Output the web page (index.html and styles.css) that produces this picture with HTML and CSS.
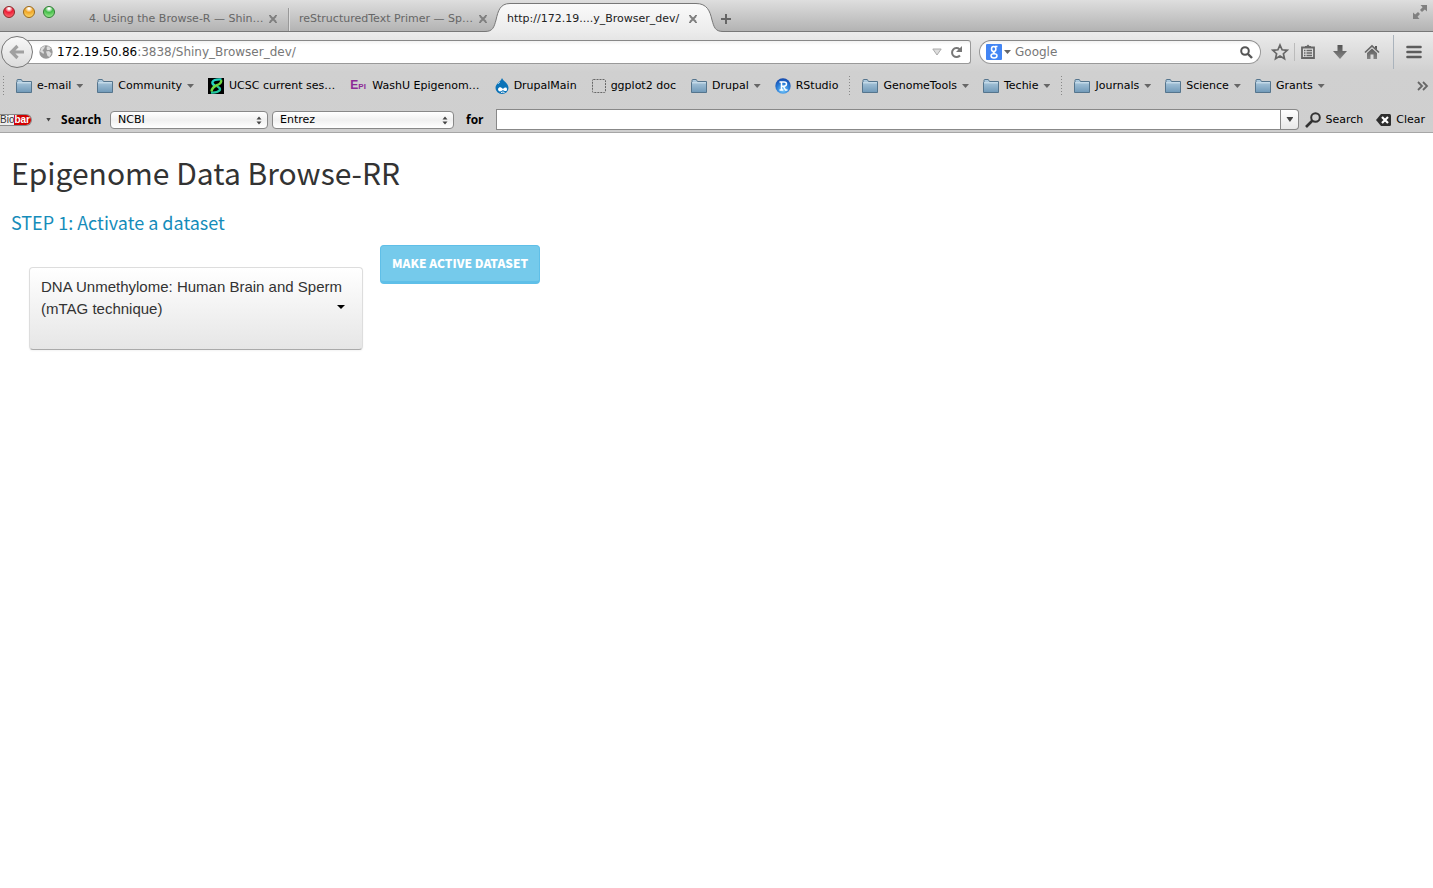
FILE: index.html
```html
<!DOCTYPE html>
<html lang="en">
<head>
<meta charset="utf-8">
<title>Epigenome Data Browse-RR</title>
<link rel="stylesheet" href="styles.css">
</head>
<body>
<svg class="defs" aria-hidden="true">
  <defs>
    <linearGradient id="folderFill" x1="0" y1="0" x2="0" y2="1"><stop offset="0" stop-color="#b4cfe2"/><stop offset="1" stop-color="#7099b8"/></linearGradient>
    <linearGradient id="tabFill" x1="0" y1="0" x2="0" y2="1"><stop offset="0" stop-color="#fafafa"/><stop offset="1" stop-color="#ebebeb"/></linearGradient>
    <linearGradient id="iconFill" x1="0" y1="0" x2="0" y2="1"><stop offset="0" stop-color="#555"/><stop offset="1" stop-color="#858585"/></linearGradient>
    <radialGradient id="rFill" cx=".5" cy=".75" r=".8"><stop offset="0" stop-color="#7fd0ff"/><stop offset=".5" stop-color="#2b7fd8"/><stop offset="1" stop-color="#0f3fa5"/></radialGradient>
    <symbol id="folder" viewBox="0 0 16 14"><path d="M1 3.5V1.2Q1 .5 1.7.5H5.3L6.5 2.5H15.5V13.5H.5V3.5Z" fill="url(#folderFill)" stroke="#55758d"/><path d="M1 3.8H15" stroke="#d3e4ef"/></symbol>
    <symbol id="cross" viewBox="0 0 10 10"><path d="M2 2 8 8M8 2 2 8" stroke="#808080" stroke-width="2"/><path d="M1 1.5H3M7 1.5H9M1 8.5H3M7 8.5H9" stroke="#808080"/></symbol>
  </defs>
</svg>
<header class="chrome">
  <div class="tabstrip">
    <div class="lights">
      <button class="light red" aria-label="Close window"></button>
      <button class="light amber" aria-label="Minimize window"></button>
      <button class="light green" aria-label="Zoom window"></button>
    </div>
    <div class="tab"><a href="#" class="tab-title">4. Using the Browse-R — Shin…</a><button class="plain" aria-label="Close tab"><svg width="10" height="10"><use href="#cross"/></svg></button></div>
    <div class="tab divided"><a href="#" class="tab-title">reStructuredText Primer — Sp…</a><button class="plain" aria-label="Close tab"><svg width="10" height="10"><use href="#cross"/></svg></button></div>
    <div class="tab active">
      <svg class="tab-shape" width="238" height="30" viewBox="0 0 238 30"><path d="M0 30V28.5C8 28.5 9 24 11 17C13 8 15 .5 25 .5H211C222 .5 225 8 227 17C229 24 230 28.5 238 28.5V30Z" fill="url(#tabFill)"/><path d="M0 28.5C8 28.5 9 24 11 17C13 8 15 .5 25 .5H211C222 .5 225 8 227 17C229 24 230 28.5 238 28.5" fill="none" stroke="#777"/></svg>
      <a href="#" class="tab-title">http://172.19....y_Browser_dev/</a><button class="plain" aria-label="Close tab"><svg width="10" height="10"><use href="#cross"/></svg></button>
    </div>
    <button class="plain new-tab" aria-label="New tab"><svg width="12" height="12"><path d="M6 1V11M1 6H11" stroke="#666" stroke-width="2"/></svg></button>
    <button class="plain fullscreen" aria-label="Full screen"><svg width="16" height="16" viewBox="0 0 16 16" fill="#808080"><path d="M8.500 1H15V7.500L12.800 5.500 10 8 8 6 10.600 3.200ZM1 8.500 3.200 10.600 6 8 8 10 5.500 12.800 7.500 15H1Z"/></svg></button>
  </div>

  <div class="navbar">
    <button class="back" aria-label="Back"><svg width="16" height="16" viewBox="0 0 16 16"><path d="M15 8H3M8.500 2 2.500 8 8.500 14" fill="none" stroke="#a0a0a0" stroke-width="3.200"/></svg></button>
    <div class="urlbar">
      <svg width="14" height="14" viewBox="0 0 14 14"><circle cx="7" cy="7" r="6.700" fill="#999"/><path d="M2.500 2.500 6 .8 5.500 3 3.500 5.500 5 7 4.500 9 1 6.500ZM7.500 2.500 9 1 12 3.500 10.500 5 8 5ZM7 6.500 10 6 12.500 8.500 10.500 12 8.500 11Z" fill="#ddd"/></svg>
      <div class="address"><b class="host">172.19.50.86</b>:3838/Shiny_Browser_dev/</div>
      <svg width="10" height="8"><path d="M.8 1H9.200L5 7Z" fill="#ddd" stroke="#aaa"/></svg>
      <button class="plain" aria-label="Reload"><svg width="13" height="13" viewBox="0 0 13 13"><path d="M10 9.500A4.500 4.500 0 1 1 9.500 3.200" fill="none" stroke="#777" stroke-width="2"/><path d="M12 0V6H6Z" fill="#777"/></svg></button>
    </div>
    <div class="searchbar">
      <svg width="16" height="16" viewBox="0 0 16 16"><rect width="16" height="16" rx="1" fill="#4285f4"/><g fill="none" stroke="#fff" stroke-width="1.500"><ellipse cx="7.700" cy="5" rx="2.200" ry="2.500"/><path d="M9 2.500H11.500M8.500 7.500Q6 8.500 9 9.500"/><ellipse cx="8" cy="11.800" rx="3" ry="2.100"/></g></svg>
      <i class="caret"></i>
      <input class="search-input" type="text" placeholder="Google" aria-label="Google">
      <button class="plain" aria-label="Go"><svg width="13" height="13" viewBox="0 0 13 13"><circle cx="5" cy="5" r="3.800" fill="none" stroke="#555" stroke-width="2"/><path d="M8 8 12 12" stroke="#555" stroke-width="2.400"/></svg></button>
    </div>
    <div class="tools">
      <button class="plain" aria-label="Bookmark this page"><svg width="18" height="18" viewBox="0 0 18 18"><path d="M9 2 11.100 6.800 16.200 7.300 12.400 10.700 13.500 15.800 9 13.100 4.500 15.800 5.600 10.700 1.800 7.300 6.900 6.800Z" fill="#ddd" stroke="#666" stroke-width="1.700"/></svg></button>
      <i class="rule"></i>
      <button class="plain" aria-label="Bookmarks"><svg width="16" height="16" viewBox="0 0 16 16"><path d="M2 3.500H14V14H2Z" fill="none" stroke="#666" stroke-width="1.800"/><path d="M5 4V2H6.500L8 .5 9.500 2H11V4Z" fill="#666"/><path d="M4 6.500H5.500M6.500 6.500H12M4 9H5.500M6.500 9H12M4 11.500H5.500M6.500 11.500H12" stroke="#666" stroke-width="1.300"/></svg></button>
      <button class="plain" aria-label="Downloads"><svg width="16" height="16" viewBox="0 0 16 16"><path d="M5.500 1H10.500V7H15L8 15 1 7H5.500Z" fill="url(#iconFill)"/></svg></button>
      <button class="plain" aria-label="Home"><svg width="16" height="16" viewBox="0 0 16 16"><path d="M1 8.500 8 2 15 8.500" fill="none" stroke="#666" stroke-width="1.700"/><path d="M11 2H13V6L11 4ZM3 9 8 4.500 13 9V15H9.500V10.500H6.500V15H3Z" fill="url(#iconFill)"/></svg></button>
      <i class="rule tall"></i>
      <button class="plain" aria-label="Menu"><svg width="16" height="16"><path d="M1.500 3H14.500M1.500 8H14.500M1.500 13H14.500" stroke="#5c5c5c" stroke-width="2.600" stroke-linecap="round"/></svg></button>
    </div>
  </div>

  <nav class="bookmarks">
    <i class="dots"></i>
    <a href="#" class="mark"><svg width="16" height="14"><use href="#folder"/></svg>e-mail<i class="caret"></i></a>
    <a href="#" class="mark"><svg width="16" height="14"><use href="#folder"/></svg>Community<i class="caret"></i></a>
    <a href="#" class="mark page-mark"><svg width="16" height="16" viewBox="0 0 16 16"><path d="M0 0H16V16H0Z"/><g fill="none" stroke-width="2.400"><path d="M13.500 1.500Q6 1 4.500 4 4 6.500 7 7.500" stroke="#22d3c0"/><path d="M9 8.500Q13 10 11.500 12.500 9 15 3 14.500" stroke="#22c8a0"/><path d="M13 2Q14 5 9.500 7 4 9 3.500 13.500" stroke="#6fd840"/></g></svg>UCSC current ses…</a>
    <a href="#" class="mark page-mark"><span class="epi">E<small>PI</small></span>WashU Epigenom…</a>
    <a href="#" class="mark page-mark"><svg width="14" height="16" viewBox="0 0 14 16"><path d="M7 0C8 3 13.500 5 13.500 10A6.500 6 0 0 1 .5 10C.5 5 6 4 7 0Z" fill="#0b73b8"/><path d="M3 11C4 8.500 6 9 8 11 10 9 12 9 12 11.500 12 14 9 13 8 12 6 14 3 14 3 11Z" fill="#fff"/><path d="M6 14.500Q8 13.500 9.500 14.500" stroke="#fff" fill="none"/><path d="M3 6 5 4" stroke="#8ec8ea"/></svg>DrupalMain</a>
    <a href="#" class="mark page-mark"><svg width="14" height="14"><rect x=".5" y=".5" width="13" height="13" rx="1" fill="none" stroke="#666" stroke-dasharray="2 1"/></svg>ggplot2 doc</a>
    <a href="#" class="mark"><svg width="16" height="14"><use href="#folder"/></svg>Drupal<i class="caret"></i></a>
    <a href="#" class="mark"><svg width="16" height="16" viewBox="0 0 16 16"><circle cx="8" cy="8" r="7.700" fill="url(#rFill)"/><path d="M4.500 4H9Q11.500 4 11.500 6T9 8.200H6.500M6.500 4V12M4.500 12H8.300M8.500 8.500 10.500 12H12.500" fill="none" stroke="#fff" stroke-width="1.500"/></svg>RStudio</a>
    <i class="dots"></i>
    <a href="#" class="mark"><svg width="16" height="14"><use href="#folder"/></svg>GenomeTools<i class="caret"></i></a>
    <a href="#" class="mark"><svg width="16" height="14"><use href="#folder"/></svg>Techie<i class="caret"></i></a>
    <i class="dots"></i>
    <a href="#" class="mark"><svg width="16" height="14"><use href="#folder"/></svg>Journals<i class="caret"></i></a>
    <a href="#" class="mark"><svg width="16" height="14"><use href="#folder"/></svg>Science<i class="caret"></i></a>
    <a href="#" class="mark"><svg width="16" height="14"><use href="#folder"/></svg>Grants<i class="caret"></i></a>
    <button class="plain overflow" aria-label="More bookmarks"><svg width="12" height="10"><path d="M1 1 5 5 1 9M6 1 10 5 6 9" fill="none" stroke="#666" stroke-width="1.800"/></svg></button>
  </nav>

  <div class="biobar">
    <button class="logo" aria-label="Biobar"><span>Bio</span><span class="bar">bar</span></button>
    <i class="caret tiny"></i>
    <label class="bar-label search-label" for="source">Search</label>
    <div class="picker source"><select id="source"><option>NCBI</option></select><svg width="6" height="9"><path d="M.5 3.500 3 .5 5.500 3.500ZM.5 5.500 3 8.500 5.500 5.500Z" fill="#444"/></svg></div>
    <div class="picker database"><select aria-label="Database"><option>Entrez</option></select><svg width="6" height="9"><path d="M.5 3.500 3 .5 5.500 3.500ZM.5 5.500 3 8.500 5.500 5.500Z" fill="#444"/></svg></div>
    <label class="bar-label for-label" for="term">for</label>
    <div class="combo"><input id="term" type="text"><button aria-label="History"><i class="caret"></i></button></div>
    <button class="plain action"><svg width="16" height="16" viewBox="0 0 16 16"><circle cx="10.500" cy="5.500" r="4.300" fill="none" stroke="#333" stroke-width="2"/><path d="M7.500 8.500 1 15" stroke="#333" stroke-width="2.600"/></svg>Search</button>
    <button class="plain action clear"><svg width="16" height="12" viewBox="0 0 16 12"><path d="M0 6 5 0H13.500Q15 0 15 1.500V10.500Q15 12 13.500 12H5Z" fill="#2e2e2e"/><path d="M6 3 12 9M12 3 6 9" stroke="#fff" stroke-width="2.200"/></svg>Clear</button>
  </div>
</header>

<main class="page">
  <h1>Epigenome Data Browse-RR</h1>
  <h2>STEP 1: Activate a dataset</h2>
  <div class="step">
    <div class="dataset-wrap">
      <select class="dataset" aria-label="Dataset"><option>DNA Unmethylome: Human Brain and Sperm (mTAG technique)</option></select>
      <i class="caret black"></i>
    </div>
    <button class="activate">MAKE ACTIVE DATASET</button>
  </div>
</main>
</body>
</html>
```
FILE: styles.css
```css
* { box-sizing: border-box; }
body { margin: 0; background: #fff; color: #000; font: 11px/16px "DejaVu Sans", sans-serif; }
a { color: inherit; text-decoration: none; }
svg { display: block; flex: none; }
button, input, select { font: inherit; color: inherit; margin: 0; }
.defs { position: absolute; width: 0; height: 0; }
.plain { border: 0; background: none; padding: 0; display: flex; align-items: center; flex: none; }

.caret { flex: none; width: 7px; height: 4px; background: #666; clip-path: polygon(0 0, 100% 0, 50% 100%); }
.caret.tiny { width: 5px; margin-left: 14px; background: #444; }

.chrome { background: linear-gradient(#ebebeb 32px, #d0d0d0 72px, #cfcfcf); border-bottom: 1px solid #a6a6a6; }

.tabstrip { display: flex; align-items: center; height: 32px; padding: 0 5px 0 3px; background: linear-gradient(#dedede, #b3b3b3); border-bottom: 1px solid #777; }
.lights { display: flex; gap: 8px; width: 76px; flex: none; padding-bottom: 7px; }
.light { width: 12px; height: 12px; padding: 0; border: 1px solid; border-radius: 50%; }
.red { border-color: #8d2424; background: radial-gradient(circle at 50% 15%, #fff 0 8%, #ee1c36 40%, #ff7c80); }
.amber { border-color: #9b6816; background: radial-gradient(circle at 50% 15%, #fff 0 8%, #f0a526 40%, #ffe680); }
.green { border-color: #2c7c32; background: radial-gradient(circle at 50% 15%, #fff 0 8%, #43bd49 40%, #b4f5a3); }
.tab { position: relative; display: flex; align-items: center; width: 210px; height: 31px; padding: 6px 11px 0 10px; color: #666; }
.tab.divided::before { content: ""; position: absolute; left: -1px; top: 8px; bottom: 0; width: 2px; background: linear-gradient(90deg, #999 50%, #ddd 50%); }
.tab.active { color: #222; padding-left: 8px; }
.tab-title { flex: 1; min-width: 0; white-space: nowrap; }
.tab .plain, .tab-title { position: relative; }
.tab-shape { position: absolute; left: -14px; top: 3px; }
.new-tab { margin-left: 11px; padding-top: 6px; }
.fullscreen { margin-left: auto; padding-bottom: 7px; }

.navbar { display: flex; align-items: center; height: 40px; padding: 0 11px 0 1px; }
.back { position: relative; z-index: 1; flex: none; width: 32px; height: 32px; padding: 0; border: 1px solid #777; border-radius: 50%; background: linear-gradient(#f8f8f8, #dcdcdc); display: grid; place-items: center; }
.urlbar, .searchbar { display: flex; align-items: center; height: 24px; border: 1px solid #999; border-top-color: #888; background: linear-gradient(#f2f2f2, #fff 4px); }
.urlbar { flex: 1; margin-left: -8px; padding: 0 7px 0 13px; border-radius: 0 3px 3px 0; gap: 4px; font-size: 12px; }
.address { flex: 1; color: #777; }
.host { font-weight: 400; color: #000; }
.urlbar .plain { margin-left: 4px; }
.searchbar { width: 282px; flex: none; margin-left: 8px; padding: 0 7px 0 6px; border-radius: 12px; gap: 2px; }
.search-input { flex: 1; min-width: 0; border: 0; padding: 0 2px; background: none; outline: 0; font-size: 12px; }
.search-input::placeholder { color: #777; opacity: 1; }
.tools { display: flex; align-items: center; gap: 5px; margin-left: 10px; }
.tools .plain + .plain { margin-left: 11px; }
.rule { width: 1px; height: 18px; background: #bbb; }
.rule.tall { height: 34px; margin: 0 7px 0 8px; background: #aab3bc; }

.bookmarks { display: flex; align-items: center; height: 28px; padding: 0 4px 0 6px; gap: 14px; }
.mark { display: flex; align-items: center; gap: 5px; white-space: nowrap; }
.page-mark { padding-right: 1px; }
.dots { width: 1px; height: 20px; margin: 0 -2px 0 -3px; background: repeating-linear-gradient(#888 0 1px, transparent 1px 3px); }
.epi { width: 17px; font: bold 12px/16px "Liberation Sans", sans-serif; color: #8c2a96; }
.epi small { font-size: 8px; }
.overflow { margin-left: auto; }

.biobar { display: flex; align-items: center; height: 32px; padding: 7px 8px 0 0; }
.logo { display: flex; padding: 0; border: 1px solid #888; border-left: 0; border-radius: 0 6px 6px 0; overflow: hidden; background: #eee; color: #333; font: 10px/10px "Liberation Sans", sans-serif; }
.logo .bar { background: #d00000; color: #fff; font-weight: 700; padding-right: 1px; }
.bar-label { font: bold 12px/16px "Open Sans", "Noto Sans", sans-serif; }
.search-label { width: 49px; margin-left: 10px; }
.for-label { width: 30px; margin-left: 12px; }
.picker { position: relative; }
.picker select { width: 100%; height: 18px; padding: 0 7px; border: 1px solid #888; border-radius: 4px; background: linear-gradient(#fff, #f0f0f0 50%, #fff); appearance: none; display: block; }
.picker svg { position: absolute; right: 6px; top: 5px; }
.source { width: 158px; }
.database { width: 182px; margin-left: 4px; }
.combo { flex: 1; display: flex; height: 21px; }
.combo input { flex: 1; min-width: 0; border: 1px solid #888; background: #fff; padding: 0 4px; }
.combo button { width: 18px; padding: 0; border: 1px solid #888; border-left: 0; border-radius: 0 4px 4px 0; background: linear-gradient(#fff, #e8e8e8); display: grid; place-items: center; }
.combo .caret { height: 5px; background: #444; }
.action { gap: 4px; margin-left: 6px; }
.action.clear { margin-left: 13px; }

.page { padding: 19px 11px; color: #333; }
h1, h2 { margin: 0; font-family: "Noto Sans CJK SC", sans-serif; font-weight: 400; }
h1 { font-size: 30px; line-height: 40px; }
h2 { margin-top: 18px; font-size: 18px; line-height: 24px; color: #158cba; }
.step { display: flex; align-items: flex-start; gap: 17px; margin-top: 11px; padding-left: 18px; }
.dataset-wrap { position: relative; width: 334px; margin-top: 22px; }
.dataset { display: block; width: 100%; height: 83px; padding: 0 11px 21px; border: 1px solid #ddd; border-bottom-color: #aaa; border-radius: 4px; background: linear-gradient(#fff, #e6e6e6); box-shadow: 0 1px 2px #0000000d; appearance: none; white-space: normal; font: 15px/22px "Liberation Sans", Arial, sans-serif; }
.caret.black { position: absolute; right: 18px; top: 38px; width: 8px; background: #000; }
.activate { padding: 7px 11px 8px; border: 1px solid #5fbfe8; border-bottom-width: 3px; border-radius: 4px; background: #75caeb; color: #fff; font: 900 12px/20px "Noto Sans CJK SC", sans-serif; }
```
